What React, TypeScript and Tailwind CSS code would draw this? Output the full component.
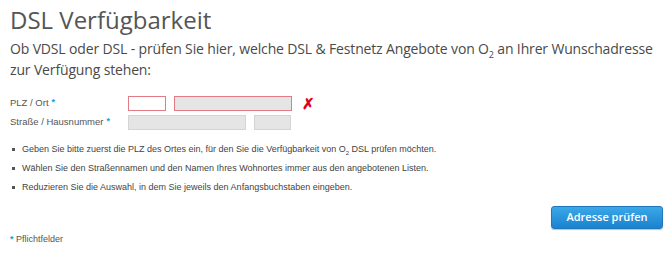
import React from 'react';

const hints = [
  <>Geben Sie bitte zuerst die PLZ des Ortes ein, für den Sie die Verfügbarkeit von O<span className="text-[6px] leading-none align-sub">2</span> DSL prüfen möchten.</>,
  <>Wählen Sie den Straßennamen und den Namen Ihres Wohnortes immer aus den angebotenen Listen.</>,
  <>Reduzieren Sie die Auswahl, in dem Sie jeweils den Anfangsbuchstaben eingeben.</>,
];

const Star = () => <span className="text-[#1a9be0] text-[9px] align-top ml-[3px] font-bold">*</span>;

export default function App() {
  return (
    <div className="w-[666px] h-[262px] bg-white text-[#4a4a4a] pl-[10px] pr-[3px] pt-[6px] overflow-hidden">
      <h1 className="text-[24px] leading-[28px] font-['Open_Sans',sans-serif] text-[#555]">DSL Verfügbarkeit</h1>

      <p className="mt-[4px] w-[645px] text-[14px] leading-[21px] tracking-[-0.15px] font-['Open_Sans',sans-serif] text-[#4a4a4a]">
        Ob VDSL oder DSL - prüfen Sie hier, welche DSL &amp; Festnetz Angebote von O<span className="text-[9px] leading-none align-sub">2</span> an Ihrer Wunschadresse zur Verfügung stehen:
      </p>

      <div className="mt-[16px] flex flex-col gap-[5px] font-['Liberation_Sans',Arial,sans-serif] text-[9.5px]">
        <div className="flex items-center h-[14px]">
          <label className="w-[118px] text-[#555]">PLZ / Ort<Star /></label>
          <input className="w-[38px] h-[15px] bg-white border border-[#e27b86]" />
          <input className="ml-[8px] w-[118px] h-[15px] bg-[#e5e5e5] border border-[#e27b86]" />
          <span className="ml-[10px] text-[#e2001a] text-[15px] font-bold leading-none">✗</span>
        </div>
        <div className="flex items-center h-[14px]">
          <label className="w-[118px] text-[#555]">Straße / Hausnummer<Star /></label>
          <input className="w-[118px] h-[15px] bg-[#e5e5e5] border border-[#d4d4d4]" />
          <input className="ml-[8px] w-[37px] h-[15px] bg-[#e5e5e5] border border-[#d4d4d4]" />
        </div>
      </div>

      <ul className="mt-[14px] flex flex-col gap-[6px] font-['Liberation_Sans',Arial,sans-serif] text-[9px] leading-[13px] text-[#444]">
        {hints.map((h, i) => (
          <li key={i} className="flex items-center">
            <span className="w-[3px] h-[3px] bg-[#555] ml-[2px] mr-[7px]" />
            <span>{h}</span>
          </li>
        ))}
      </ul>

      <div className="flex justify-end mt-[12px]">
        <button className="w-[112px] h-[23px] rounded-[3px] bg-gradient-to-b from-[#3aa8e8] to-[#1a82cf] border border-[#1f78bd] text-white text-[11px] font-['Open_Sans',sans-serif] font-semibold shadow-[0_1px_1px_rgba(0,0,0,0.25)]">
          Adresse prüfen
        </button>
      </div>

      <div className="mt-[4px] font-['Liberation_Sans',Arial,sans-serif] text-[9px] text-[#555]">
        <span className="text-[#1a9be0] font-bold align-top">*</span> Pflichtfelder
      </div>
    </div>
  );
}
